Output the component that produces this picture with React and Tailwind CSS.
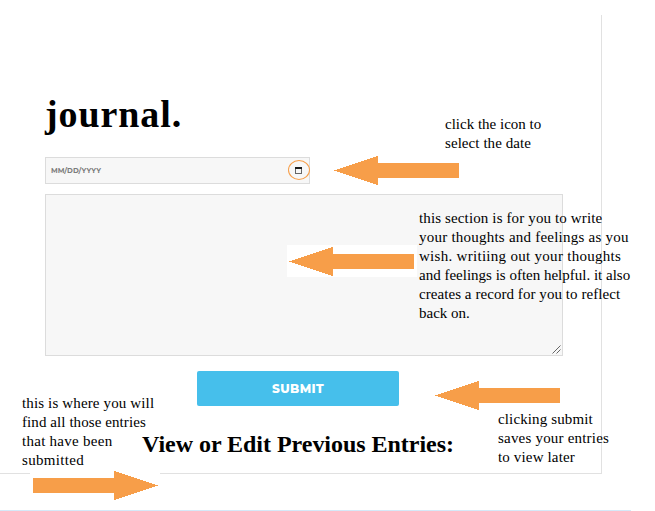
function Arrow({ className = "" }) {
  return (
    <svg className={`shrink-0 ${className}`} width="126" height="29" viewBox="0 0 126 29" shapeRendering="crispEdges" aria-hidden="true">
      <path d="M0 14.5 44 0V7H125V22H44V29Z" fill="#f79e49" />
    </svg>
  );
}

function Note({ className, lines }) {
  return (
    <p className={`absolute whitespace-nowrap font-['Liberation_Serif',serif] text-[15px] leading-[19px] text-black ${className}`}>
      {lines.map(([text, tracking]) => (
        <span key={text} className={`block ${tracking}`}>{text}</span>
      ))}
    </p>
  );
}

function CalendarIcon() {
  return (
    <svg width="7" height="7" viewBox="0 0 7 7" shapeRendering="crispEdges" aria-hidden="true">
      <path d="M0 0H7V7H0Z" fill="#666" />
      <path d="M0 0H7V2H0Z" fill="#1c1c1c" />
      <path d="M1 2H6V6H1Z" fill="#f7f7f7" />
    </svg>
  );
}

export default function App() {
  return (
    <div className="relative h-[511px] w-[655px] overflow-hidden bg-white pt-[15px]">
      <main className="flex h-[459px] w-[602px] flex-col border-r border-b border-[#e1e1e1] pl-[45px]">
        <h1 className="mt-[76px] h-[65px] font-['Liberation_Serif',serif] text-[38px] leading-[46px] font-bold tracking-[0.9px] text-black">
          journal.
        </h1>
        <div className="flex h-[29px] items-start gap-6">
          <div className="mt-px flex h-[27px] w-[265px] items-start justify-between border border-[#dcdcdc] bg-[#f7f7f7] pt-[2px] pl-[5px] font-['Montserrat','Inter',sans-serif] text-[7px] font-bold text-[#7c7c7c]">
            <span className="pt-px leading-[20px]">MM/DD/YYYY</span>
            <span className="-mr-px flex h-[20px] w-[22px] items-center justify-center rounded-[50%] border border-[#f79e49] pr-px">
              <CalendarIcon />
            </span>
          </div>
          <Arrow />
        </div>
        <div className="mt-[9px] flex h-[162px] w-[518px] items-end justify-end border border-[#dcdcdc] bg-[#f7f7f7] p-px">
          <div className="mr-[135px] mb-[77px] flex h-[32px] w-[130px] items-start bg-white pt-[2px] pl-[2px]">
            <Arrow />
          </div>
          <svg width="9" height="9" viewBox="0 0 9 9" aria-hidden="true">
            <path d="M0.5 8.5 8.5 0.5M4.5 8.5 8.5 4.5" stroke="#555" strokeWidth="0.9" />
          </svg>
        </div>
        <div className="mt-[15px] flex h-[39px] items-start gap-9 pl-[152px]">
          <button className="h-[35px] w-[202px] rounded-[2px] bg-[#46bfeb] pt-px font-['Montserrat','Inter',sans-serif] text-[12px] font-extrabold tracking-[0.4px] text-white">
            SUBMIT
          </button>
          <Arrow className="mt-[10px]" />
        </div>
        <h2 className="mt-5 ml-[97px] font-['Liberation_Serif',serif] text-[24px] leading-[28px] font-bold tracking-[-0.03px] whitespace-nowrap text-black">
          View or Edit Previous Entries:
        </h2>
      </main>
      <div className="mt-[36px] h-px w-[631px] bg-[#d5e9f8]" />

      <div className="absolute top-[470px] left-[30px] h-[32px] w-[130px] bg-white pt-px pl-[2px]">
        <Arrow className="rotate-180" />
      </div>

      <Note
        className="top-[115px] left-[445px]"
        lines={[
          ["click the icon to", "tracking-[0px]"],
          ["select the date", "tracking-[0.07px]"],
        ]}
      />
      <Note
        className="top-[209px] left-[419px]"
        lines={[
          ["this section is for you to write", "tracking-[0.13px]"],
          ["your thoughts and feelings as you", "tracking-[0.23px]"],
          ["wish. writiing out your thoughts", "tracking-[0.29px]"],
          ["and feelings is often helpful. it also", "tracking-[0px]"],
          ["creates a record for you to reflect", "tracking-[0.06px]"],
          ["back on.", "tracking-[0px]"],
        ]}
      />
      <Note
        className="top-[410px] left-[498px]"
        lines={[
          ["clicking submit", "tracking-[0.13px]"],
          ["saves your entries", "tracking-[0.2px]"],
          ["to view later", "tracking-[0.15px]"],
        ]}
      />
      <Note
        className="top-[394px] left-[22px]"
        lines={[
          ["this is where you will", "tracking-[0.14px]"],
          ["find all those entries", "tracking-[0.08px]"],
          ["that have been", "tracking-[0.27px]"],
          ["submitted", "tracking-[0.33px]"],
        ]}
      />
    </div>
  );
}
